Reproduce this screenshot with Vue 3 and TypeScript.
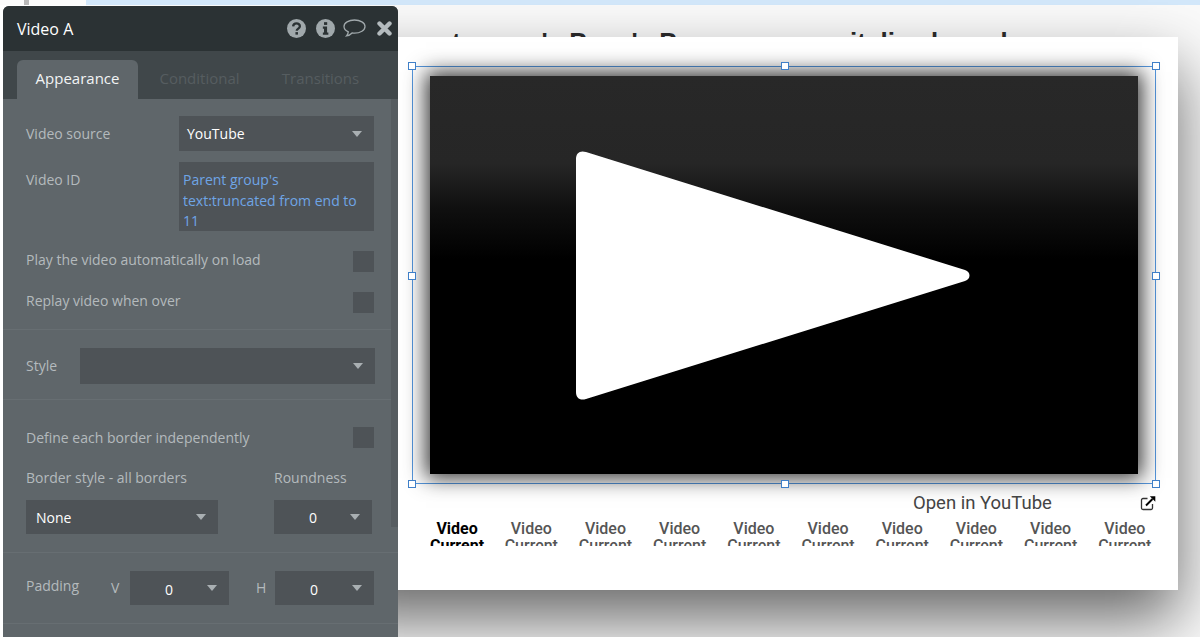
<script setup lang="ts">
const thumbs = Array.from({ length: 10 }, (_, i) => ({ id: i, active: i === 0 }))
const handles = ['tl', 'tc', 'tr', 'ml', 'mr', 'bl', 'bc', 'br']
</script>

<template>
  <div class="editor">
    <div class="topbar">
      <span class="tick"></span>
      <span class="topbar-blue"></span>
    </div>

    <!-- free canvas: the page being edited -->
    <div class="canvas">
      <div class="page-title">Parent group's Page's Page name:capitalized words</div>
      <div class="page">
        <div class="selection">
          <span v-for="h in handles" :key="h" :class="['handle', h]"></span>
          <div class="video">
            <svg class="play" width="394" height="249" viewBox="0 0 394 249">
              <path
                d="M0 8C0 2 4 -1 10 1L389 119C395 121 395 128 389 130L10 248C4 250 0 247 0 241Z"
                fill="#fff"
              />
            </svg>
          </div>
        </div>
        <div class="open-row">
          <span class="open-label">Open in YouTube</span>
          <svg class="open-icon" width="16" height="16" viewBox="0 0 16 16">
            <path d="M7.5 3.5H3a1.5 1.5 0 0 0-1.5 1.500v8A1.500 1.500 0 0 0 3 14.500h8a1.500 1.500 0 0 0 1.500-1.500V9" fill="none" stroke="#333" stroke-width="1.300" />
            <path d="M6 10.500 12.500 4" stroke="#000" stroke-width="1.900" />
            <path d="M9.800 1.200H15.300V6.800Z" fill="#000" />
          </svg>
        </div>
        <div class="thumbs">
          <div v-for="t in thumbs" :key="t.id" :class="['thumb', { active: t.active }]">Video<br />Current</div>
        </div>
      </div>
    </div>

    <!-- floating property editor -->
    <aside class="panel">
      <header class="panel-head">
        <span class="panel-title">Video A</span>
        <div class="head-icons">
          <svg width="19" height="19" viewBox="0 0 18 18">
            <circle cx="9" cy="9" r="9" fill="#a0a8ab" />
            <path d="M5.800 7C6 5 7.400 4.200 9 4.200c1.800 0 3.200 1 3.200 2.700 0 2.300-3 2.200-3 4.300" fill="none" stroke="#2b3234" stroke-width="2.200" />
            <rect x="8" y="12.400" width="2.400" height="2.400" fill="#2b3234" />
          </svg>
          <svg width="19" height="19" viewBox="0 0 18 18">
            <circle cx="9" cy="9" r="9" fill="#a0a8ab" />
            <rect x="7.600" y="3" width="3" height="2.600" fill="#2b3234" />
            <path d="M6.500 7.200h4v5.700h1.200v2H6.500v-2h1.100V9.200H6.500Z" fill="#2b3234" />
          </svg>
          <svg class="bubble" width="23" height="19" viewBox="0 0 23 19">
            <path
              d="M11.500 1C5.700 1 1 3.800 1 7.500c0 2.300 1.700 4.200 4.300 5.400-.2 1.600-.9 3-1.800 4 2.400-.3 4.300-1.500 5.600-2.900.8.100 1.600.2 2.400.2 5.800 0 10.500-3 10.500-6.700S17.300 1 11.500 1Z"
              fill="none"
              stroke="#a0a8ab"
              stroke-width="1.300"
            />
          </svg>
          <svg class="close" width="15" height="15" viewBox="0 0 15 15">
            <path d="M2.500 2.500 12.500 12.500M12.500 2.500 2.500 12.500" stroke="#b4bbbe" stroke-width="4.400" stroke-linecap="round" />
          </svg>
        </div>
      </header>

      <nav class="tabs">
        <span class="tab active">Appearance</span>
        <span class="tab">Conditional</span>
        <span class="tab">Transitions</span>
      </nav>

      <div class="panel-body">
        <div class="scroll-track"></div>

        <section class="group group-video">
          <div class="row row-source">
            <label class="label">Video source</label>
            <div class="select wide"><span>YouTube</span><i class="caret"></i></div>
          </div>
          <div class="row row-id">
            <label class="label">Video ID</label>
            <div class="expr">Parent group's text:truncated from end to 11</div>
          </div>
          <div class="row row-check">
            <label class="label">Play the video automatically on load</label>
            <span class="check"></span>
          </div>
          <div class="row row-check second">
            <label class="label">Replay video when over</label>
            <span class="check"></span>
          </div>
        </section>

        <section class="group group-style">
          <div class="row">
            <label class="label style-label">Style</label>
            <div class="select style-select"><i class="caret"></i></div>
          </div>
        </section>

        <section class="group group-border">
          <div class="row row-check">
            <label class="label">Define each border independently</label>
            <span class="check"></span>
          </div>
          <div class="border-grid">
            <label class="label">Border style - all borders</label>
            <label class="label">Roundness</label>
            <div class="select none-select"><span>None</span><i class="caret"></i></div>
            <div class="select num"><span>0</span><i class="caret"></i></div>
          </div>
        </section>

        <section class="group group-padding">
          <label class="label pad-label">Padding</label>
          <label class="label pad-v">V</label>
          <div class="select num"><span>0</span><i class="caret"></i></div>
          <label class="label pad-h">H</label>
          <div class="select num"><span>0</span><i class="caret"></i></div>
        </section>
      </div>
    </aside>
  </div>
</template>

<style>
html,
body {
  margin: 0;
  overflow: hidden;
}
</style>

<style scoped>
.editor {
  position: relative;
  width: 1200px;
  height: 637px;
  overflow: hidden;
  background: #fff;
  font-family: 'Open Sans', 'Liberation Sans', sans-serif;
}

.topbar {
  display: flex;
  height: 5px;
  position: relative;
  background: #fcfcfc;
}

.tick {
  width: 5px;
  margin-left: 24px;
  background: #b9b9b9;
}

.topbar-blue {
  margin-left: 57px;
  flex: 1;
  background: #d3e8fb;
}

.canvas {
  position: relative;
  height: 632px;
  margin-left: 86px;
  background: #fafafa;
}

.page-title {
  position: absolute;
  top: 22px;
  right: 178px;
  font: bold 26px/30px 'Liberation Sans', sans-serif;
  color: #2b2b2b;
  white-space: nowrap;
}

.page {
  position: absolute;
  left: 250px;
  top: 32px;
  width: 842px;
  height: 553px;
  background: #fff;
  box-shadow: 0 30px 60px rgba(0, 0, 0, 0.58);
}

.selection {
  position: absolute;
  left: 76px;
  top: 29px;
  width: 744px;
  height: 418px;
  box-sizing: border-box;
  border: 1px solid #5597de;
}

.handle {
  position: absolute;
  width: 8px;
  height: 8px;
  box-sizing: border-box;
  background: #fff;
  border: 1px solid #3f7fc8;
  z-index: 2;
}

.tl { left: -5px; top: -5px; }
.tc { left: 368px; top: -5px; }
.tr { right: -5px; top: -5px; }
.ml { left: -5px; top: 205px; }
.mr { right: -5px; top: 205px; }
.bl { left: -5px; bottom: -5px; }
.bc { left: 368px; bottom: -5px; }
.br { right: -5px; bottom: -5px; }

.video {
  position: absolute;
  left: 17px;
  top: 9px;
  width: 708px;
  height: 398px;
  background: linear-gradient(#282828 0%, #262626 22%, #101010 33%, #000 46%);
  box-shadow: 0 0 20px 4px rgba(0, 0, 0, 0.8);
}

.play {
  position: absolute;
  left: 146px;
  top: 75px;
}

.open-row {
  position: absolute;
  left: 76px;
  top: 454px;
  width: 744px;
  height: 24px;
  display: flex;
  align-items: center;
}

.open-label {
  margin-left: 501px;
  font: 18.5px/24px Roboto, sans-serif;
  color: #444;
}

.open-icon {
  margin-left: auto;
  flex: none;
}

.thumbs {
  position: absolute;
  left: 84px;
  top: 483px;
  height: 26px;
  display: flex;
  overflow: hidden;
}

.thumb {
  width: 74.2px;
  text-align: center;
  font: 500 16px/17px Roboto, sans-serif;
  color: #555;
}

.thumb.active {
  color: #000;
  font-weight: 700;
}

.panel {
  position: absolute;
  left: 3px;
  top: 6px;
  width: 395px;
  height: 640px;
  display: flex;
  flex-direction: column;
  border-radius: 6px 6px 0 0;
  overflow: hidden;
  background: #5f666a;
  color: #b4babd;
  font-size: 14px;
}

.panel-head {
  flex: none;
  height: 45px;
  display: flex;
  align-items: center;
  padding: 0 6px 0 14px;
  background: #2b3234;
}

.panel-title {
  flex: 1;
  font-size: 16px;
  color: #fff;
}

.head-icons {
  display: flex;
  align-items: center;
  gap: 10px;
}

.bubble {
  margin-left: -2px;
}

.close {
  margin-left: 1px;
}

.tabs {
  flex: none;
  height: 48px;
  box-sizing: border-box;
  padding: 9px 0 0 14px;
  display: flex;
  background: #40474a;
  font-size: 15px;
  color: #565d60;
}

.tab {
  width: 121px;
  text-align: center;
  line-height: 36px;
  margin-right: 1px;
}

.tab:nth-child(3) {
  margin-left: -1px;
}

.tab.active {
  background: #5f666a;
  border-radius: 6px 6px 0 0;
  color: #f2f4f5;
}

.panel-body {
  position: relative;
  flex: 1;
}

.scroll-track {
  position: absolute;
  right: 0;
  top: 0;
  width: 7px;
  height: 428px;
  background: #565c60;
}

.group {
  padding: 0 23px;
  border-bottom: 1px solid #676e72;
}

.group-video {
  height: 231px;
  box-sizing: border-box;
  padding: 17px 24px 0 23px;
}

.group-style {
  height: 70px;
  box-sizing: border-box;
  padding-top: 18px;
}

.group-border {
  height: 153px;
  box-sizing: border-box;
  padding: 27px 24px 0 23px;
}

.group-padding {
  height: 71px;
  box-sizing: border-box;
  display: flex;
  align-items: center;
}

.row {
  display: flex;
  justify-content: space-between;
  align-items: center;
}

.row-id {
  align-items: flex-start;
  margin-top: 11px;
}

.row-id .label {
  margin-top: 8px;
}

.row-check {
  height: 21px;
}

.group-video .row-check {
  margin-top: 20px;
}

.group-video .row-check .label {
  padding-bottom: 3px;
}

.label {
  line-height: 20px;
  color: #b4babd;
}

.select {
  display: flex;
  align-items: center;
  justify-content: space-between;
  box-sizing: border-box;
  background: #4e5357;
  color: #fff;
  font-size: 14px;
}

.wide {
  width: 195px;
  height: 35px;
  padding: 0 12px 0 8px;
}

.expr {
  width: 195px;
  height: 69px;
  box-sizing: border-box;
  padding: 8px 4px 0;
  background: #4e5357;
  color: #6ea5e6;
  line-height: 20.5px;
}

.check {
  width: 21px;
  height: 21px;
  background: #4e5357;
}

.style-label {
  width: 54px;
}

.style-select {
  width: 295px;
  height: 36px;
  justify-content: flex-end;
  padding-right: 12px;
}

.border-grid {
  display: grid;
  grid-template-columns: 192px 98px;
  column-gap: 56px;
  margin-top: 20px;
}

.none-select {
  height: 34px;
  margin-top: 12px;
  padding: 0 12px 0 10px;
}

.num {
  width: 98px;
  height: 34px;
  padding: 0 12px 0 35px;
}

.border-grid .num {
  margin-top: 12px;
}

.group-padding .num {
  width: 99px;
  padding-top: 3px;
}

.group-padding .caret {
  margin-top: -3px;
}

.pad-label {
  width: 85px;
  margin-top: -4px;
}

.pad-v {
  width: 19px;
}

.pad-h {
  margin-left: 27px;
  width: 19px;
}

.caret {
  width: 0;
  height: 0;
  border-left: 5.5px solid transparent;
  border-right: 5.5px solid transparent;
  border-top: 6px solid #a9afb2;
}
</style>
